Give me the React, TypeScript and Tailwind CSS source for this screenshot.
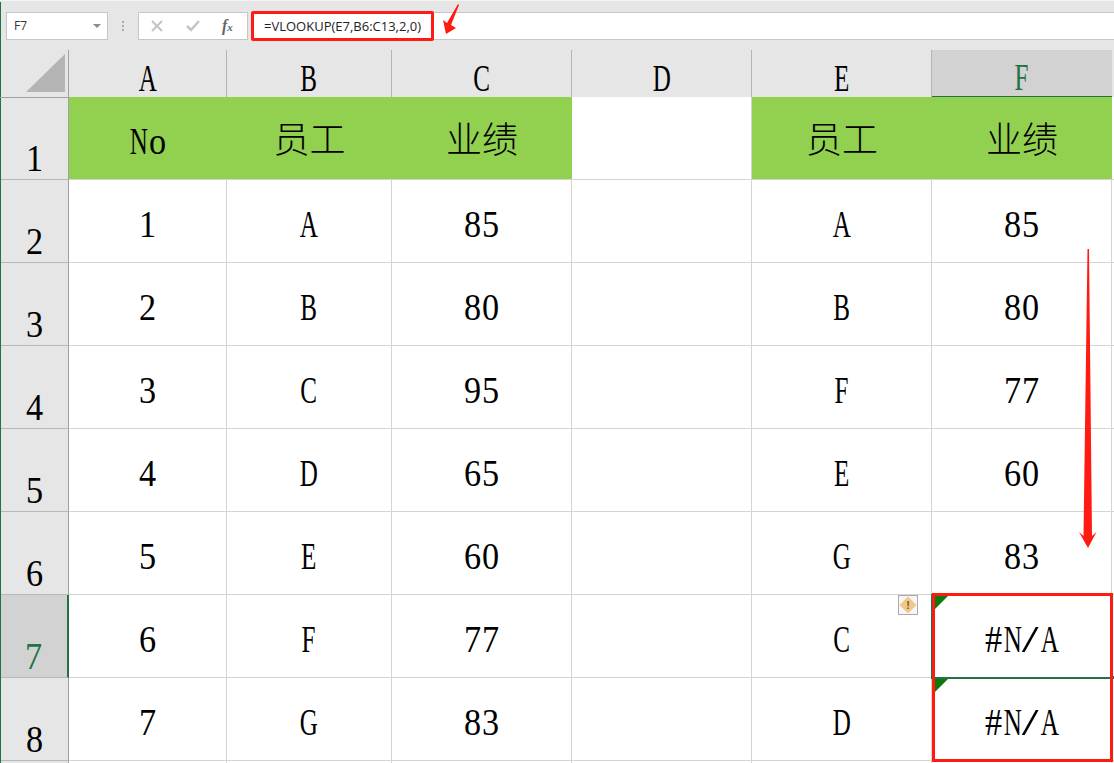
import React from "react";

const serif = "[font-family:'Liberation_Serif','Noto_Sans_CJK_SC',serif]";

const rows = [
  ["No", "员工", "业绩", "", "员工", "业绩"],
  ["1", "A", "85", "", "A", "85"],
  ["2", "B", "80", "", "B", "80"],
  ["3", "C", "95", "", "F", "77"],
  ["4", "D", "65", "", "E", "60"],
  ["5", "E", "60", "", "G", "83"],
  ["6", "F", "77", "", "C", "#N/A"],
  ["7", "G", "83", "", "D", "#N/A"],
];

// the sheet font is half-width, so each latin char sits in an 18px slot
function Half({ text }: { text: string }) {
  return (
    <span className="inline-flex">
      {text.split("").map((ch, i) => (
        <span key={i} className="inline-flex w-[18.5px] justify-center">
          <span className={/[A-Z]/.test(ch) ? "inline-block scale-x-[.66]" : ch === "/" ? "inline-block scale-x-[1.6]" : "inline-block scale-x-[.9]"}>
            {ch}
          </span>
        </span>
      ))}
    </span>
  );
}

function Label({ text }: { text: string }) {
  if (/[\u4e00-\u9fff]/.test(text)) {
    return <span className="text-[36px] font-extralight">{text}</span>;
  }
  return <Half text={text} />;
}

function Cell({ text, col, row }: { text: string; col: number; row: number }) {
  const green = row === 0 && col !== 3;
  const borderR = green ? "" : "border-r border-r-[#d4d4d4]";
  return (
    <div className={`relative flex items-center justify-center pt-[6px] ${green ? "bg-[#92d050]" : "bg-white"} ${borderR} border-b border-b-[#d4d4d4]`}>
      {col === 5 && row >= 6 && (
        <svg className="absolute left-0 top-0" width="18" height="18" viewBox="0 0 18 18">
          <polygon points="0,0 17,0 0,17" fill="#0b7a0b" />
        </svg>
      )}
      <Label text={text} />
    </div>
  );
}

export default function App() {
  return (
    <div className={`relative h-[763px] w-[1114px] overflow-hidden bg-[#e6e6e6] text-[38px] leading-none text-black ${serif}`}>
      <div className="absolute bottom-0 left-0 top-[2px] w-px bg-[#217346]" />

      {/* formula bar */}
      <div className="flex h-[50px] items-start border-t border-t-[#f4f4f4] pl-[6px] pt-[11px] [font-family:'Open_Sans',sans-serif]">
        <div className="flex h-[28px] w-[102px] items-center justify-between border border-[#c6c6c6] bg-white pl-[7px] pr-[6px] text-[12px] text-[#333]">
          F7
          <span className="h-0 w-0 border-x-[4px] border-t-[4px] border-x-transparent border-t-[#8a8a8a]" />
        </div>
        <div className="flex h-[28px] w-[30px] flex-col items-center justify-center gap-[2px]">
          <span className="h-[2px] w-[2px] bg-[#aaa]" />
          <span className="h-[2px] w-[2px] bg-[#aaa]" />
          <span className="h-[2px] w-[2px] bg-[#aaa]" />
        </div>
        <div className="flex h-[28px] w-[110px] items-center border border-[#c6c6c6] bg-white">
          <svg className="ml-[12px]" width="12" height="12" viewBox="0 0 12 12">
            <path d="M1 1 L11 11 M11 1 L1 11" stroke="#c4c4c4" strokeWidth="2" fill="none" />
          </svg>
          <svg className="ml-[23px]" width="14" height="12" viewBox="0 0 14 12">
            <path d="M1 6 L5 10 L13 1" stroke="#c4c4c4" strokeWidth="2.5" fill="none" />
          </svg>
          <span className="ml-[22px] text-[16px] font-bold italic text-[#666] [font-family:'Liberation_Serif',serif]">
            f<span className="text-[11px]">x</span>
          </span>
        </div>
        <div className="ml-[5px] flex h-[28px] flex-1 items-center border-y border-y-[#c6c6c6] bg-white pl-[11px] text-[13px] text-[#222]">
          =VLOOKUP(E7,B6:C13,2,0)
        </div>
      </div>

      {/* column headers */}
      <div className="grid h-[47px] grid-cols-[69px_158px_165px_180px_180px_180px_180px_1fr]">
        <div className="relative border-b border-r border-b-[#a0a0a0] border-r-[#a0a0a0]">
          <svg className="absolute left-[25px] top-[4px]" width="41" height="39" viewBox="0 0 41 39">
            <polygon points="40,0 40,38 1,38" fill="#b4b4b4" />
          </svg>
        </div>
        {["A", "B", "C", "D", "E", "F"].map((c) => (
          <div
            key={c}
            className={
              c === "F"
                ? "flex items-center justify-center border-b-2 border-b-[#217346] bg-[#d2d2d2] pt-[8px] text-[#217346]"
                : "flex items-center justify-center border-b border-r border-b-[#a0a0a0] border-r-[#b4b4b4] pt-[8px]"
            }
          >
            <Half text={c} />
          </div>
        ))}
        <div className="border-b border-b-[#a0a0a0]" />
      </div>

      {/* sheet */}
      {rows.map((r, i) => (
        <div key={i} className="grid h-[83px] grid-cols-[69px_158px_165px_180px_180px_180px_180px_1fr]">
          <div
            className={
              i === 6
                ? "flex items-end justify-center border-b border-r-2 border-b-[#b8b8b8] border-r-[#217346] bg-[#d2d2d2] pb-[2px] text-[#217346]"
                : "flex items-end justify-center border-b border-r border-b-[#b8b8b8] border-r-[#a0a0a0] pb-[2px]"
            }
          >
            <Half text={String(i + 1)} />
          </div>
          {r.map((t, j) => (
            <Cell key={j} text={t} col={j} row={i} />
          ))}
          <div className="border-b border-b-[#d4d4d4] bg-white" />
        </div>
      ))}
      <div className="grid h-[10px] grid-cols-[69px_158px_165px_180px_180px_180px_180px_1fr] bg-white">
        <div className="border-r border-r-[#a0a0a0] bg-[#e6e6e6]" />
        <div className="border-r border-r-[#d4d4d4]" />
        <div className="border-r border-r-[#d4d4d4]" />
        <div className="border-r border-r-[#d4d4d4]" />
        <div className="border-r border-r-[#d4d4d4]" />
        <div className="border-r border-r-[#d4d4d4]" />
        <div className="border-r border-r-[#d4d4d4]" />
      </div>

      {/* selection + callouts */}
      <div className="absolute left-[931px] top-[594px] h-[85px] w-[181px] border-2 border-[#217346]" />
      <div className="absolute left-[1110px] top-[675px] h-[5px] w-[5px] border border-white bg-[#217346]" />
      <div className="absolute left-[898px] top-[595px] flex h-[20px] w-[20px] items-center justify-center border border-[#aaa] bg-[#f6f6f6]">
        <div className="h-[12px] w-[12px] rotate-45 bg-[#f0c88a]" />
        <span className="absolute text-[11px] font-bold text-[#7a5a20] [font-family:'Liberation_Sans',sans-serif]">!</span>
      </div>
      <div className="absolute left-[251px] top-[11px] h-[30px] w-[183px] rounded-[2px] border-[3px] border-[#ff1a12]" />
      <div className="absolute left-[932px] top-[593px] h-[169px] w-[181px] border-[3px] border-[#ff1a12]" />
      <svg className="absolute left-0 top-0" width="1114" height="763" viewBox="0 0 1114 763">
        <polygon points="1087.5,249 1089,249 1092,536 1096.5,532 1088,548 1079,532 1083.5,536" fill="#ff1a12" />
        <polygon points="458,4 459,5 451,25 456,28 446,34 443,20 447,23" fill="#ff1a12" />
      </svg>
    </div>
  );
}
